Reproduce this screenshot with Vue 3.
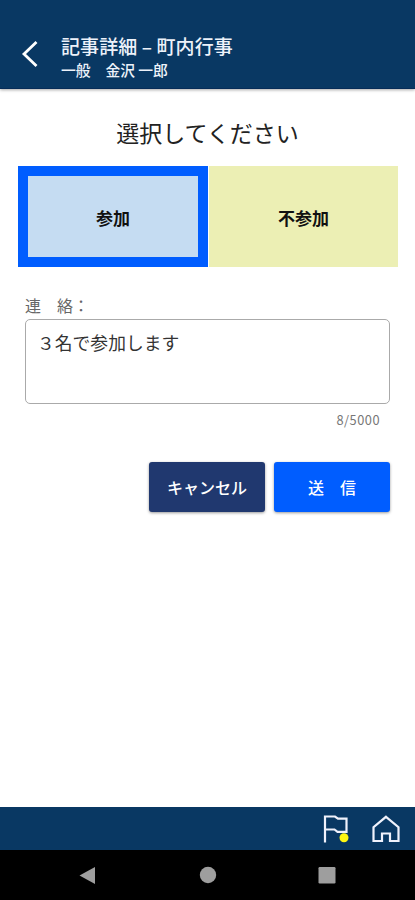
<script setup>
import { ref, computed } from 'vue'

const choices = [
  { id: 'yes', label: '参加' },
  { id: 'no', label: '不参加' },
]
const selected = ref('yes')
const message = ref('３名で参加します')
const counter = computed(() => `${message.value.length}/5000`)
</script>

<template>
  <div class="screen">
    <header class="header">
      <svg class="back" viewBox="0 0 18 28" width="18" height="28">
        <path d="M16.5 2 L4 14 L16.5 26" />
      </svg>
      <div class="heading">
        <h1>記事詳細 – 町内行事</h1>
        <p>一般　金沢 一郎</p>
      </div>
    </header>

    <main class="main">
      <h2 class="prompt">選択してください</h2>
      <div class="choices">
        <button
          v-for="c in choices"
          :key="c.id"
          class="choice"
          :class="[c.id, { selected: selected === c.id }]"
          @click="selected = c.id"
        >{{ c.label }}</button>
      </div>

      <section class="contact">
        <label class="label" for="message">連　絡：</label>
        <textarea id="message" v-model="message" class="message" maxlength="5000"></textarea>
        <div class="counter">{{ counter }}</div>
      </section>

      <div class="actions">
        <button class="action cancel">キャンセル</button>
        <button class="action send">送　信</button>
      </div>
    </main>

    <footer class="tabs">
      <svg viewBox="0 0 30 32" width="30" height="32">
        <path class="line" d="M4 29.5 V3.5 H14 L17 5.6 H25.5 V18.8 H16.5 L13.5 16.5 H4" />
        <circle cx="23" cy="24.8" r="4.5" fill="#fff712" />
      </svg>
      <svg viewBox="0 0 30 32" width="30" height="32">
        <path class="line" d="M15 3.8 L27.5 14.2 V28 H19 V20.5 H11 V28 H2.5 V14.2 Z" />
      </svg>
    </footer>

    <nav class="system">
      <svg viewBox="0 0 18 18" width="18" height="18"><path d="M16 1 V18 L0.5 9.5 Z" /></svg>
      <svg viewBox="0 0 18 18" width="18" height="18"><circle cx="9" cy="9" r="8.2" /></svg>
      <svg viewBox="0 0 18 18" width="18" height="18"><rect x="0.5" y="1" width="17" height="16.5" rx="1.2" /></svg>
    </nav>
  </div>
</template>

<style>
body {
  margin: 0;
  background: #fff;
}
</style>

<style scoped>
.screen {
  display: flex;
  flex-direction: column;
  width: 415px;
  height: 900px;
  overflow: hidden;
  background: #fff;
  font-family: "Noto Sans CJK JP", sans-serif;
  color: #222;
}
h1, h2, p {
  margin: 0;
}
button, textarea {
  font-family: inherit;
}
.header {
  display: flex;
  box-sizing: border-box;
  height: 89px;
  flex: none;
  padding: 34px 0 0 20px;
  background: #093863;
  border-bottom: 1px solid #062c58;
  box-shadow: 0 1px 3px rgba(0, 0, 0, 0.35);
  color: #edf2fa;
}
.back {
  margin-top: 6px;
  fill: none;
  stroke: #fff;
  stroke-width: 2.8;
}
.heading {
  padding-left: 23px;
}
.heading h1 {
  font-size: 19px;
  line-height: 23px;
  font-weight: 500;
  letter-spacing: 0.1px;
  white-space: nowrap;
}
.heading p {
  font-size: 14.8px;
  line-height: 25px;
  font-weight: 500;
}
.main {
  flex: 1;
}
.prompt {
  padding-top: 26px;
  text-align: center;
  font-size: 23px;
  line-height: 34px;
  font-weight: 400;
}
.choices {
  display: grid;
  grid-template-columns: 190px 189px;
  gap: 1px;
  padding: 17px 0 0 18px;
}
.choice {
  height: 101px;
  padding: 2px 0 0;
  border: 10px solid transparent;
  font-size: 17px;
  font-weight: 700;
  color: #111;
  background: #c5dcf2;
}
.choice.no {
  background: #ecefb4;
  border-color: #ecefb4;
}
.choice.selected {
  border-color: #005dff;
}
.contact {
  display: flex;
  flex-direction: column;
  padding: 27px 25px 0;
}
.label {
  font-size: 16px;
  line-height: 22px;
  color: #666;
}
.message {
  box-sizing: border-box;
  height: 85px;
  margin-top: 3px;
  padding: 9px 11px;
  border: 1px solid #aaa;
  border-radius: 5px;
  resize: none;
  outline: none;
  font-size: 17.8px;
  line-height: 26px;
  color: #333;
}
.counter {
  padding: 7px 10px 0 0;
  text-align: right;
  font-size: 12.8px;
  line-height: 18px;
  letter-spacing: 0.5px;
  color: #777;
}
.actions {
  display: flex;
  justify-content: flex-end;
  gap: 9px;
  padding: 33px 25px 0 0;
}
.action {
  width: 116px;
  height: 50px;
  padding: 0;
  border: 0;
  border-radius: 3px;
  box-shadow: 0 1px 3px rgba(0, 0, 0, 0.4);
  font-size: 16px;
  font-weight: 500;
  color: #fff;
}
.cancel {
  background: #20386f;
}
.send {
  background: #005dff;
}
.tabs {
  display: flex;
  flex: none;
  justify-content: flex-end;
  align-items: center;
  gap: 20px;
  height: 43px;
  padding-right: 14px;
  background: #093863;
}
.line {
  fill: none;
  stroke: #f0f2fc;
  stroke-width: 2.2;
}
.system {
  display: flex;
  flex: none;
  justify-content: space-between;
  align-items: center;
  box-sizing: border-box;
  height: 50px;
  padding: 0 79px;
  background: #000;
  fill: #9e9e9e;
}
</style>
